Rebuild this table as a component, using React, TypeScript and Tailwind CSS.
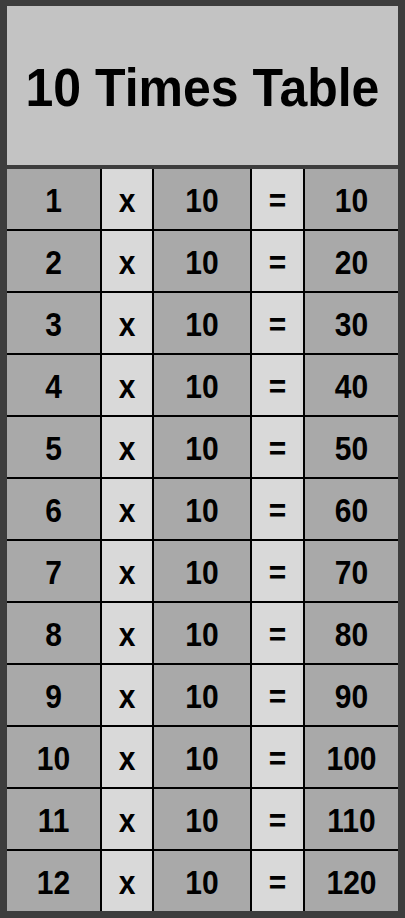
import React from "react";

const rows = Array.from({ length: 12 }, (_, i) => i + 1);

function Cell({ children, light }: { children: React.ReactNode; light?: boolean }) {
  return (
    <div
      className={`flex items-center justify-center pt-[3px] ${light ? "bg-[#d9d9d9]" : "bg-[#a9a9a9]"}`}
    >
      <span className="text-[30px] font-bold leading-none text-black scale-y-[1.12]">
        {children}
      </span>
    </div>
  );
}

export default function App() {
  return (
    <div
      className="w-[405px] h-[918px] bg-[#3d3d3d] pl-[7px] pr-[7px] pt-[6px] pb-[7px] flex flex-col"
      style={{ fontFamily: '"Liberation Sans", Arial, sans-serif' }}
    >
      <div className="h-[159px] bg-[#c3c3c3] flex items-center justify-center pt-[4px]">
        <h1 className="text-[50px] font-bold leading-none text-black scale-y-[1.08]">
          10 Times Table
        </h1>
      </div>
      <div className="mt-[4px] h-[742px] grid grid-cols-[93px_50px_96px_51px_93px] grid-rows-12 gap-[2px] bg-black">
        {rows.map((n) => (
          <React.Fragment key={n}>
            <Cell>{n}</Cell>
            <Cell light>x</Cell>
            <Cell>10</Cell>
            <Cell light>=</Cell>
            <Cell>{n * 10}</Cell>
          </React.Fragment>
        ))}
      </div>
    </div>
  );
}
